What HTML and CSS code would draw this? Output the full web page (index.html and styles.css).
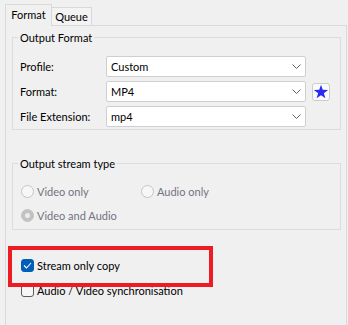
FILE: index.html
```html
<!DOCTYPE html>
<html>
<head>
<meta charset="utf-8">
<link rel="stylesheet" href="styles.css">
</head>
<body>
<div class="window">
  <div class="tabs">
    <div class="tab active">Format</div>
    <div class="tab">Queue</div>
  </div>
  <div class="panel">
    <div class="group g1">
      <div class="group-title">Output Format</div>
      <div class="form">
        <div class="row">
          <span class="label">Profile:</span>
          <div class="combo"><span>Custom</span><svg class="chev" width="9" height="5" viewBox="0 0 9 5"><path d="M0.5 0.5 L4.5 4.5 L8.5 0.5" fill="none" stroke="#606060" stroke-width="1"/></svg></div>
        </div>
        <div class="row">
          <span class="label">Format:</span>
          <div class="combo"><span>MP4</span><svg class="chev" width="9" height="5" viewBox="0 0 9 5"><path d="M0.5 0.5 L4.5 4.5 L8.5 0.5" fill="none" stroke="#606060" stroke-width="1"/></svg></div>
          <button class="star"><svg width="16" height="16" viewBox="0 0 16 16"><polygon points="8,0.8 9.76,5.87 15.13,5.98 10.85,9.23 12.41,14.37 8,11.3 3.59,14.37 5.15,9.23 0.87,5.98 6.24,5.87" fill="#2a2af5"/></svg></button>
        </div>
        <div class="row">
          <span class="label">File Extension:</span>
          <div class="combo"><span>mp4</span><svg class="chev" width="9" height="5" viewBox="0 0 9 5"><path d="M0.5 0.5 L4.5 4.5 L8.5 0.5" fill="none" stroke="#606060" stroke-width="1"/></svg></div>
        </div>
      </div>
    </div>
    <div class="group g2">
      <div class="group-title">Output stream type</div>
      <div class="radios">
        <div class="radio"><span class="circle"></span><span>Video only</span></div>
        <div class="radio"><span class="circle"></span><span>Audio only</span></div>
        <div class="radio"><span class="circle on"></span><span>Video and Audio</span></div>
      </div>
    </div>
    <div class="checks">
      <div class="check"><span class="box on"><svg width="9" height="7" viewBox="0 0 9 7"><path d="M1 3.5 L3.5 6 L8 1" fill="none" stroke="#fff" stroke-width="1.1"/></svg></span><span>Stream only copy</span></div>
      <div class="check"><span class="box"></span><span>Audio / Video synchronisation</span></div>
    </div>
  </div>
  <div class="highlight"></div>
</div>
</body>
</html>
```
FILE: styles.css
```css
html, body {
  margin: 0;
  padding: 0;
  background: #f0f0f0;
}
.window {
  position: relative;
  width: 348px;
  height: 325px;
  overflow: hidden;
  background: #f0f0f0;
  font-family: "Segoe UI", Lato, sans-serif;
  font-size: 11px;
  color: #000;
}
.tabs {
  display: flex;
  align-items: flex-end;
  height: 25px;
  padding-left: 5px;
}
.tab {
  box-sizing: border-box;
  height: 18px;
  width: 40px;
  border-top: 1px solid #d9d9d9;
  border-right: 1px solid #d9d9d9;
  background: #f3f3f3;
  text-align: center;
  line-height: 18px;
}
.tab.active {
  position: relative;
  z-index: 1;
  height: 22px;
  width: 47px;
  margin-bottom: -1px;
  border-left: 1px solid #d9d9d9;
  background: #f0f0f0;
  line-height: 19px;
}
.panel {
  box-sizing: border-box;
  margin-left: 5px;
  width: 342px;
  height: 320px;
  border: 1px solid #d9d9d9;
  padding: 0 5px 0 6px;
}
.group {
  border: 1px solid #dcdcdc;
}
.g1 {
  margin-top: 11px;
  padding: 0 0 2px 7px;
}
.g2 {
  margin-top: 33px;
  padding: 0 0 6px 8px;
}
.group-title {
  width: fit-content;
  margin-top: -8px;
  margin-left: -2px;
  padding: 0 2px;
  line-height: 16px;
  background: #f0f0f0;
}
.g2 .group-title {
  margin-left: -3px;
}
.form {
  display: flex;
  flex-direction: column;
  gap: 4px;
  margin-top: 10px;
}
.row {
  display: flex;
  align-items: center;
  height: 21px;
}
.label {
  width: 86px;
  flex: none;
}
.combo {
  box-sizing: border-box;
  width: 200px;
  height: 21px;
  display: flex;
  align-items: center;
  justify-content: space-between;
  padding: 0 4px 0 4px;
  background: #fff;
  border: 1px solid #cfcfcf;
  border-radius: 2px;
}
.chev {
  display: block;
}
.star {
  box-sizing: border-box;
  margin-left: 6px;
  width: 18px;
  height: 18px;
  padding: 0;
  display: flex;
  align-items: center;
  justify-content: center;
  background: #fbfbfb;
  border: 1px solid #cccccc;
  border-radius: 3px;
}
.radios {
  display: grid;
  grid-template-columns: 120px auto;
  row-gap: 8px;
  margin-top: 11px;
  color: #737380;
}
.radio {
  display: flex;
  align-items: center;
  height: 16px;
  gap: 3px;
}
.circle {
  box-sizing: border-box;
  width: 13px;
  height: 13px;
  border-radius: 50%;
  border: 1px solid #c4c4c4;
  background: #f7f7f7;
  display: flex;
  align-items: center;
  justify-content: center;
}
.circle.on {
  background: #c2c2c2;
  border-color: #c2c2c2;
}
.circle.on::after {
  content: "";
  width: 5px;
  height: 5px;
  border-radius: 50%;
  background: #ececec;
}
.checks {
  display: flex;
  flex-direction: column;
  gap: 9px;
  margin-top: 27px;
  padding-left: 9px;
}
.check {
  display: flex;
  align-items: center;
  height: 16px;
  gap: 3px;
}
.box {
  box-sizing: border-box;
  width: 13px;
  height: 13px;
  border-radius: 3px;
  border: 1px solid #5c5c5c;
  background: #f7f7f7;
  display: flex;
  align-items: center;
  justify-content: center;
}
.box.on {
  background: #005fb8;
  border-color: #005fb8;
}
.box svg {
  display: block;
}
.highlight {
  position: absolute;
  left: 8px;
  top: 246px;
  width: 205px;
  height: 41px;
  box-sizing: border-box;
  border: 4px solid #ed1c24;
}
```
